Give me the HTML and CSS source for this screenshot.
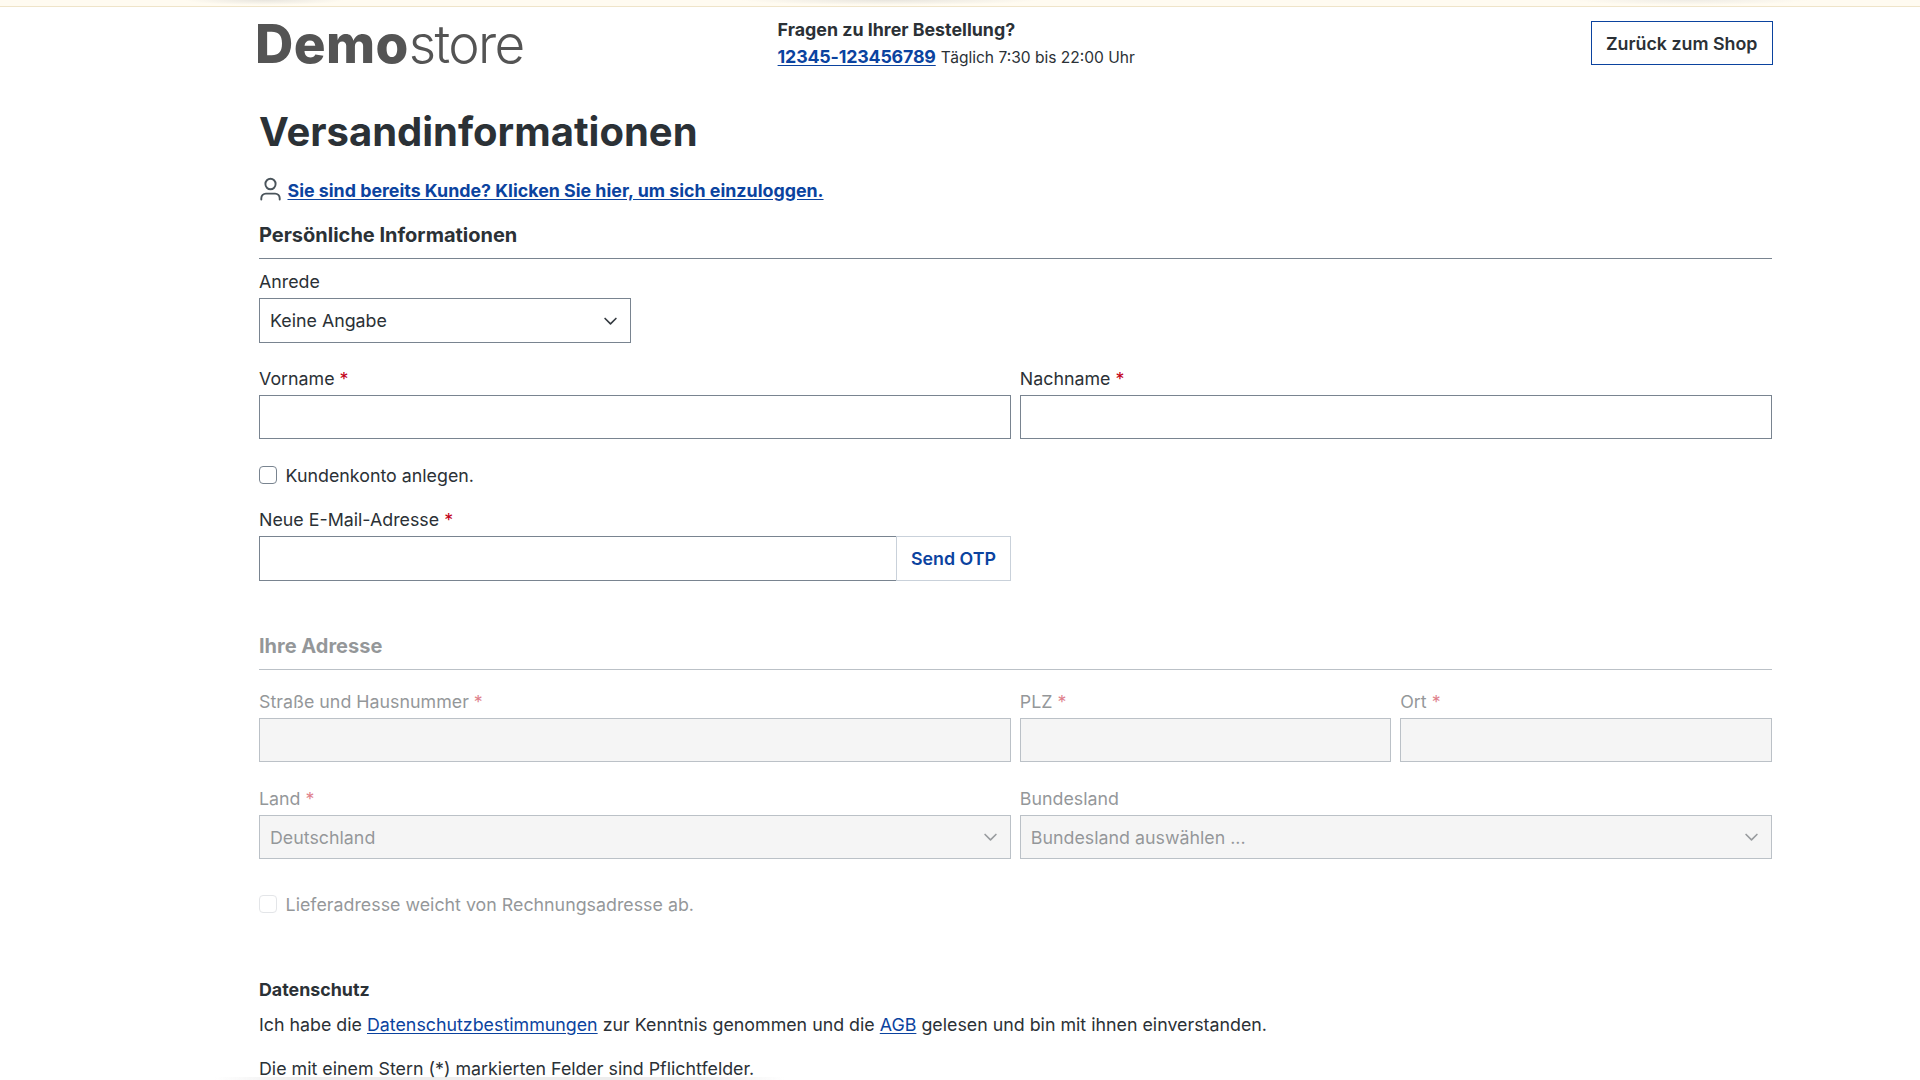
FILE: index.html
```
<!DOCTYPE html>
<html lang="de">
<head>
    <meta charset="UTF-8">
    <title>Versandinformationen | Demostore</title>
    <link rel="stylesheet" href="styles.css">
</head>
<body>
    <div class="top-notice"></div>
    <header class="container header">
        <a class="logo" href="#"><b>Demo</b><span>store</span></a>
        <div class="header-contact">
            <strong>Fragen zu Ihrer Bestellung?</strong>
            <div><a class="phone" href="#">12345-123456789</a> <small>Täglich 7:30 bis 22:00 Uhr</small></div>
        </div>
        <a class="btn-back" href="#">Zurück zum Shop</a>
    </header>

    <main class="container">
        <h1>Versandinformationen</h1>
        <div class="login-hint">
            <svg class="icon-user" viewBox="0 0 22 24" fill="none" stroke="#4a545b" stroke-width="1.9" stroke-linecap="round">
                <ellipse cx="11" cy="7" rx="5.1" ry="5.3"/>
                <path d="M1.8 22.6v-1.4a4.6 4.6 0 0 1 4.6-4.6h9.2a4.6 4.6 0 0 1 4.6 4.6v1.4"/>
            </svg>
            <a href="#">Sie sind bereits Kunde? Klicken Sie hier, um sich einzuloggen.</a>
        </div>

        <form>
            <section>
                <h2>Persönliche Informationen</h2>
                <div class="row">
                    <div class="field">
                        <label>Anrede</label>
                        <div class="control select">Keine Angabe
                            <svg class="chevron" viewBox="0 0 12 8"><path d="M1 1.2l5 5 5-5"/></svg>
                        </div>
                    </div>
                </div>
                <div class="row">
                    <div class="field wide">
                        <label for="firstName">Vorname <i>*</i></label>
                        <input class="control" type="text" id="firstName">
                    </div>
                    <div class="field wide">
                        <label for="lastName">Nachname <i>*</i></label>
                        <input class="control" type="text" id="lastName">
                    </div>
                </div>
                <div class="check">
                    <input type="checkbox" id="account">
                    <label for="account">Kundenkonto anlegen.</label>
                </div>
                <div class="row email-row">
                    <div class="field wide">
                        <label for="email">Neue E-Mail-Adresse <i>*</i></label>
                        <div class="input-group">
                            <input class="control" type="email" id="email">
                            <button class="btn-otp" type="button">Send OTP</button>
                        </div>
                    </div>
                </div>
            </section>

            <section class="address disabled">
                <h2>Ihre Adresse</h2>
                <div class="row">
                    <div class="field wide">
                        <label for="street">Straße und Hausnummer <i>*</i></label>
                        <input class="control" type="text" id="street" disabled>
                    </div>
                    <div class="field">
                        <label for="zip">PLZ <i>*</i></label>
                        <input class="control" type="text" id="zip" disabled>
                    </div>
                    <div class="field">
                        <label for="city">Ort <i>*</i></label>
                        <input class="control" type="text" id="city" disabled>
                    </div>
                </div>
                <div class="row">
                    <div class="field wide">
                        <label>Land <i>*</i></label>
                        <div class="control select">Deutschland
                            <svg class="chevron" viewBox="0 0 12 8"><path d="M1 1.2l5 5 5-5"/></svg>
                        </div>
                    </div>
                    <div class="field wide">
                        <label>Bundesland</label>
                        <div class="control select">Bundesland auswählen ...
                            <svg class="chevron" viewBox="0 0 12 8"><path d="M1 1.2l5 5 5-5"/></svg>
                        </div>
                    </div>
                </div>
                <div class="check">
                    <input type="checkbox" id="shipping" disabled>
                    <label for="shipping">Lieferadresse weicht von Rechnungsadresse ab.</label>
                </div>
            </section>

            <section class="privacy">
                <strong>Datenschutz</strong>
                <p>Ich habe die <a href="#">Datenschutzbestimmungen</a> zur Kenntnis genommen und die <a href="#">AGB</a> gelesen und bin mit ihnen einverstanden.</p>
                <p class="required-hint">Die mit einem Stern (*) markierten Felder sind Pflichtfelder.</p>
            </section>
        </form>
    </main>
    <div class="bottom-shade"></div>
</body>
</html>
```

FILE: styles.css
```
* {
    box-sizing: border-box;
}

body {
    margin: 0;
    height: 1080px;
    overflow: hidden;
    background: #fff;
    color: #2b3136;
    font-family: Inter, "Liberation Sans", sans-serif;
    font-size: 17.82px;
    line-height: 26.67px;
}

a {
    color: #0b439f;
    text-underline-offset: 2px;
}

.container {
    width: 1512.7px;
    margin-left: 259px;
}

.top-notice {
    height: 7px;
    border-bottom: 1px solid #efe4c9;
    background:
        radial-gradient(ellipse 80px 5px at 265px 0, #e8e5de, transparent),
        radial-gradient(ellipse 150px 5px at 890px 0, #e8e5de, transparent),
        radial-gradient(ellipse 120px 5px at 1690px 0, #efece5, transparent),
        #fffbf1;
}

/* header */
.header {
    display: grid;
    grid-template-columns: 518.6px 1fr auto;
    align-items: start;
    height: 101.4px;
}

.logo {
    margin: 4.6px 0 0 -4px;
    color: #545454;
    font-size: 53px;
    line-height: 64px;
    text-decoration: none;
}

.logo b {
    font-weight: 800;
    letter-spacing: .4px;
}

.logo span {
    font-weight: 300;
    letter-spacing: -1.6px;
}

.header-contact {
    padding-top: 9.9px;
}

.header-contact strong {
    display: block;
    font-weight: 700;
}

.phone {
    font-weight: 700;
    letter-spacing: -.18px;
}

.header-contact small {
    font-size: 15.56px;
}

.btn-back {
    height: 44.5px;
    margin: 13.5px -1px 0 0;
    padding: 0 14.3px;
    border: 1px solid #0b439f;
    color: #2b3136;
    font-weight: 600;
    line-height: 43px;
    text-decoration: none;
}

h1 {
    margin: 0 0 20.9px;
    font-size: 40px;
    font-weight: 700;
    line-height: 48px;
}

.login-hint {
    display: flex;
    gap: 5.5px;
    height: 26.67px;
    margin-bottom: 14.7px;
    font-weight: 700;
}

.login-hint a {
    padding-top: .6px;
}

.icon-user {
    width: 23px;
    height: 24px;
}

h2 {
    margin: 0 0 9.2px;
    padding: .9px 0 8.4px;
    border-bottom: 1px solid #798490;
    font-size: 20px;
    font-weight: 700;
    line-height: 30px;
}

/* form */
.row {
    display: grid;
    grid-template-columns: repeat(4, 1fr);
    gap: 8.89px;
    margin-bottom: 22.2px;
}

.wide {
    grid-column: span 2;
}

.field label {
    display: block;
    padding-top: .9px;
    margin-bottom: 2.5px;
}

.field i {
    color: #c20017;
    font-style: normal;
}

.control {
    display: block;
    width: 100%;
    height: 44.4px;
    padding: 0 10px;
    border: 1px solid #798490;
    border-radius: 0;
    background: #fff;
}

.select {
    display: flex;
    align-items: center;
    justify-content: space-between;
    padding-top: 2px;
    padding-right: 13px;
}

.chevron {
    width: 13px;
    height: 9px;
    fill: none;
    stroke: #343a40;
    stroke-width: 1.5;
    stroke-linecap: round;
    stroke-linejoin: round;
}

.check {
    display: flex;
    align-items: center;
    gap: 8.6px;
    margin-bottom: 18px;
}

.check input {
    appearance: none;
    width: 18px;
    height: 18px;
    margin: 0;
    border: 1px solid #798490;
    border-radius: 4px;
    background: #fff;
}

.check label {
    padding-top: 1.4px;
    margin-bottom: -1.4px;
}

.email-row {
    margin-bottom: 49.4px;
}

.input-group {
    display: flex;
}

.input-group .control {
    flex: 1;
    border-right: 0;
}

.btn-otp {
    width: 115px;
    border: 1px solid #c9d1da;
    padding: 1.6px 0 0;
    background: #fff;
    color: #0b439f;
    font: inherit;
    font-weight: 600;
}

.disabled {
    opacity: .5;
}

.disabled h2 {
    margin-bottom: 17.8px;
}

.disabled .control {
    background: #ededed;
}

.disabled .check {
    margin: 31.7px 0 59.1px;
}

.disabled .check input {
    border-color: #c9cdd2;
}

.privacy strong {
    font-weight: 700;
}

.privacy p {
    margin: 8.6px 0 17.8px;
}

.bottom-shade {
    position: fixed;
    left: 215px;
    bottom: 0;
    width: 570px;
    height: 3px;
    background: linear-gradient(90deg, transparent, rgba(225, 225, 225, .6) 15%, rgba(225, 225, 225, .6) 85%, transparent);
}
```
